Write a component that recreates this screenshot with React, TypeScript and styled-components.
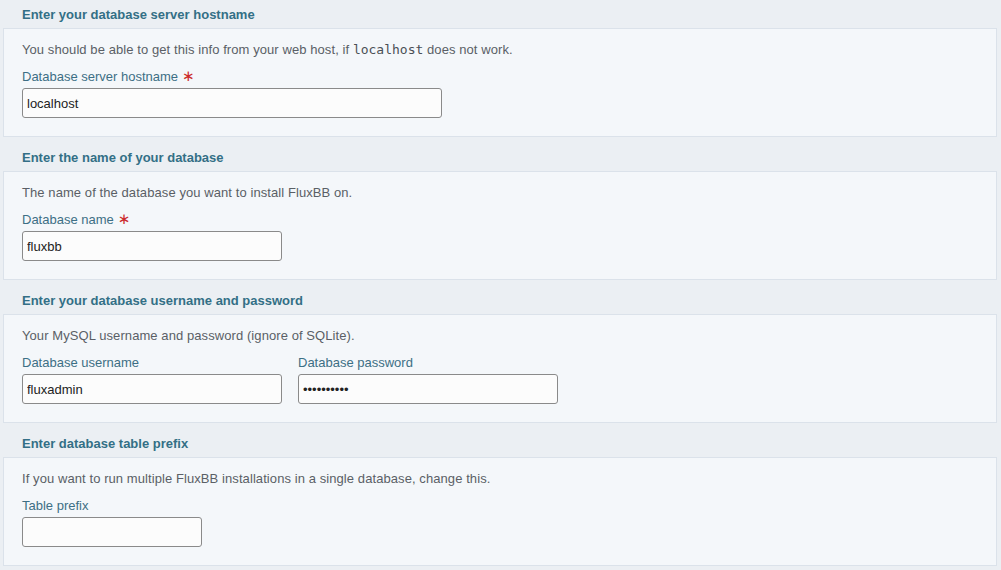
import React from "react";
import styled, { createGlobalStyle } from "styled-components";

const Global = createGlobalStyle`
  html, body { margin: 0; padding: 0; background: #ebeff3; }
  body { font-family: "Liberation Sans", Arial, sans-serif; font-size: 13px; }
`;

const Page = styled.div`
  padding: 0 4px 0 3px;
`;

const Section = styled.section`
  & + & { margin-top: 6px; }
`;

const Heading = styled.h2`
  margin: 0;
  padding: 6px 0 4px 19px;
  font-size: 13px;
  line-height: 18px;
  font-weight: bold;
  color: #336f86;
`;

const Box = styled.div`
  background: #f4f7fa;
  border: 1px solid #dbe2ea;
  padding: 12px 18px 18px 18px;
`;

const Desc = styled.p`
  margin: 0 0 8px;
  line-height: 18px;
  color: #5a5f66;
  letter-spacing: 0.08px;
`;

const Code = styled.code`
  font-family: "DejaVu Sans Mono", monospace;
  font-size: 13px;
  letter-spacing: 0;
  color: #4a4f55;
`;

const Row = styled.div`
  display: flex;
  gap: 16px;
`;

const Field = styled.label`
  display: flex;
  flex-direction: column;
  gap: 2px;
`;

const LabelText = styled.span`
  padding-top: 1px;
  line-height: 18px;
  height: 18px;
  color: #3d6f85;
`;

const Req = styled.span`
  color: #cc2b2b;
  margin-left: 4px;
  font-family: "DejaVu Sans", sans-serif;
  font-size: 15px;
  line-height: 0;
`;

const Input = styled.input<{ $w: number }>`
  box-sizing: border-box;
  width: ${(p) => p.$w}px;
  height: 30px;
  border: 1px solid #8a8a8a;
  border-radius: 3px;
  background: #fcfcfc;
  padding: 0 4px;
  font-family: "Liberation Sans", Arial, sans-serif;
  font-size: 13px;
  color: #222;
  outline: none;
`;

export default function App() {
  return (
    <>
      <Global />
      <Page>
        <Section>
          <Heading>Enter your database server hostname</Heading>
          <Box>
            <Desc>
              You should be able to get this info from your web host, if <Code>localhost</Code> does not work.
            </Desc>
            <Field>
              <LabelText>
                Database server hostname<Req>∗</Req>
              </LabelText>
              <Input $w={420} defaultValue="localhost" />
            </Field>
          </Box>
        </Section>
        <Section>
          <Heading>Enter the name of your database</Heading>
          <Box>
            <Desc>The name of the database you want to install FluxBB on.</Desc>
            <Field>
              <LabelText>
                Database name<Req>∗</Req>
              </LabelText>
              <Input $w={260} defaultValue="fluxbb" />
            </Field>
          </Box>
        </Section>
        <Section>
          <Heading>Enter your database username and password</Heading>
          <Box>
            <Desc>Your MySQL username and password (ignore of SQLite).</Desc>
            <Row>
              <Field>
                <LabelText>Database username</LabelText>
                <Input $w={260} defaultValue="fluxadmin" />
              </Field>
              <Field>
                <LabelText>Database password</LabelText>
                <Input $w={260} type="password" defaultValue="fluxadmin1" />
              </Field>
            </Row>
          </Box>
        </Section>
        <Section>
          <Heading>Enter database table prefix</Heading>
          <Box>
            <Desc>If you want to run multiple FluxBB installations in a single database, change this.</Desc>
            <Field>
              <LabelText>Table prefix</LabelText>
              <Input $w={180} defaultValue="" />
            </Field>
          </Box>
        </Section>
      </Page>
    </>
  );
}
